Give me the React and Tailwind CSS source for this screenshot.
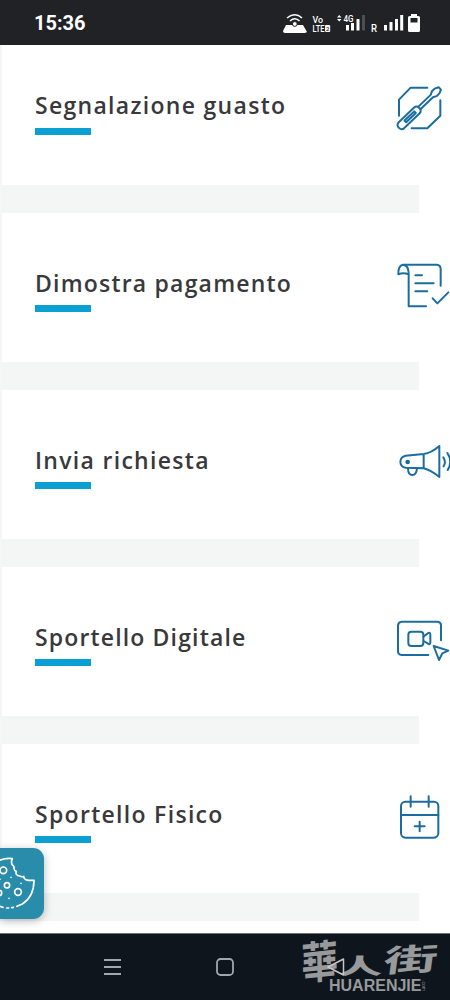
import React from "react";

const ToolIcon = () => (
  <g>
    <path d="M142 53H92L57 89V137M95 175H142L181 137V91" />
    <g transform="translate(66 164) rotate(-43.8)">
      <rect x="-13" y="-12" width="85" height="24" rx="10" />
      <path d="M14 -3.500H54V3.500H14Z" />
      <path d="M74 -5H124L134 -10H146L157 -5V5L146 10H134L124 5H74" />
    </g>
  </g>
);

const ReceiptIcon = () => (
  <g transform="translate(0 9)">
    <path d="M69 41H170Q182 42 182 54V104M69 41Q54 44 55 70Q70 64 86 70V166H138M69 41Q86 42 86 70" />
    <path d="M106 73H126M106 97H161M106 121H142M158 142L172 157L205 124" />
  </g>
);

const MegaphoneIcon = () => (
  <g transform="translate(0 18)">
    <path d="M77 74Q61 77 61 93Q62 108 77 110L131 112Q153 118 178 138V45Q154 66 131 69ZM131 69V112" />
    <path d="M84 111Q84 132 97 132Q109 132 111 112M190 79Q199 92 191 106M202 66Q219 91 203 117" />
    <circle cx="83" cy="93" r="4" fill="currentColor" />
  </g>
);

const VideoIcon = () => (
  <g transform="translate(0 10)">
    <path d="M145 149H65Q54 148 54 138V60Q55 50 65 49H173Q183 50 183 60V105" />
    <rect x="85" y="79" width="45" height="43" rx="9" />
    <path d="M131 93L145 83Q151 81 151 88V112Q150 119 144 115L131 107M161 122L205 136L187 144L177 164Z" />
  </g>
);

const CalendarIcon = () => (
  <g transform="translate(0 4)">
    <rect x="63" y="64" width="112" height="108" rx="13" />
    <path d="M63 104H175M92 48V79M146 48V79M119 124V153M104 138H134" />
  </g>
);

const services = [
  { title: "Segnalazione guasto", Icon: ToolIcon, tracking: "tracking-[1.3px]" },
  { title: "Dimostra pagamento", Icon: ReceiptIcon, tracking: "tracking-[1.2px]" },
  { title: "Invia richiesta", Icon: MegaphoneIcon, tracking: "tracking-[1.3px]" },
  { title: "Sportello Digitale", Icon: VideoIcon, tracking: "tracking-[1.15px]" },
  { title: "Sportello Fisico", Icon: CalendarIcon, tracking: "tracking-[1.3px]" },
];

const StatusBar = () => (
  <header className="h-[45px] shrink-0 bg-[#212226] flex items-center justify-between pl-[34px] pr-[30px] text-white">
    <span className="font-['Roboto',sans-serif] font-bold text-[20px] leading-none">
      15:36
    </span>
    <svg width="138" height="24" viewBox="282 10 138 24" fill="white">
      {/* hotspot */}
      <path d="M286 24H303L307 31Q306 32 304 32H285Q283 32 283 30Z" />
      <circle cx="294.8" cy="23" r="2.4" stroke="#212226" strokeWidth="1" />
      <path
        d="M287 17Q295 10.5 302 17M290 20Q295 15.5 299.5 20"
        fill="none"
        stroke="white"
        strokeWidth="1.5"
      />
      <g fontFamily="Roboto, sans-serif" fontWeight="500">
        <text x="312.500" y="22" fontSize="9.500" textLength="10.500" lengthAdjust="spacingAndGlyphs">Vo</text>
        <text x="312.500" y="30.700" fontSize="9.500" textLength="12" lengthAdjust="spacingAndGlyphs">LTE</text>
        <rect x="325" y="24" width="5.200" height="7" rx="1" />
        <text x="326" y="30" fontSize="6" fill="#212226">2</text>
        <text x="343.500" y="20.800" fontSize="9.500" textLength="10" lengthAdjust="spacingAndGlyphs">4G</text>
        <text x="371" y="30.500" fontSize="10.500" textLength="6" lengthAdjust="spacingAndGlyphs">R</text>
      </g>
      <path d="M337 16.5L339.2 14L341.5 16.5ZM337 18L339.2 20.5L341.5 18Z" />
      <path d="M346 24h3v5.5h-3zM351 22h3v7.5h-3zM356.500 18h3v11.500h-3z" />
      <path d="M362 14h3v15.500h-3z" opacity=".2" />
      <path d="M384 24h3v5.500h-3zM389.500 21h3v8.500h-3zM395 18h3v11.500h-3zM400.200 14h3v15.500h-3z" />
      {/* battery */}
      <path
        fillRule="evenodd"
        d="M411 13h6v2h1.500q1.500 0 1.500 1.500v13q0 1.500-1.500 1.500h-9q-1.500 0-1.500-1.500v-13q0-1.500 1.500-1.500h1.500zM410.500 17v4.500h7V17z"
      />
    </svg>
  </header>
);

const ServiceCard = ({ title, Icon, tracking }) => (
  <article>
    <div className="h-[149.200px] bg-white flex justify-between items-start">
      <div className="pt-[55px] pl-[33px]">
        <h2
          className={`font-['Open_Sans',sans-serif] font-semibold text-[23px] leading-[30px] whitespace-nowrap text-[#39393b] ${tracking}`}
        >
          {title}
        </h2>
        <div className="mt-[7.300px] w-[56px] h-[7px] bg-[#0b9fd2]" />
      </div>
      <svg
        className="mt-[35px] w-[70px] h-[70px] shrink-0 text-[#1b6d9f]"
        viewBox="0 0 210 210"
        fill="none"
        stroke="currentColor"
        strokeWidth="6"
        strokeLinecap="round"
        strokeLinejoin="round"
      >
        <Icon />
      </svg>
    </div>
    <div className="h-[28px] w-[417px] bg-[#f4f6f6]" />
  </article>
);

const CookieButton = () => (
  <button
    aria-label="Cookie"
    className="absolute left-0 top-[803px] w-[44px] h-[71px] rounded-r-[11px] bg-[#298caa] shadow-[0_2px_9px_rgba(0,0,0,0.28)]"
  >
    <svg
      width="44"
      height="71"
      viewBox="0 0 132 213"
      fill="none"
      stroke="white"
      strokeWidth="5"
      strokeLinecap="round"
      strokeLinejoin="round"
    >
      <path d="M-4 38Q15 29 37 32Q30 48 42 56Q41 67 49 70Q45 82 59 84Q67 88 71 85Q72 95 85 97H102Q102 146 67 168L51 175M40 178L35 179M26 180L20 180M9 178L-5 174" />
      <circle cx="10" cy="67" r="10" />
      <circle cx="21" cy="112" r="8" />
      <circle cx="54" cy="132" r="10" />
      <circle cx="-3" cy="135" r="8" />
      <path d="M33 88V88.100M63 106V106.100M27 151V151.100M0 94V94.100" />
    </svg>
  </button>
);

const Watermark = () => (
  <div className="absolute left-[300px] top-0 w-[150px] h-full text-[#98999b] leading-none">
    <div className="font-['Noto_Sans_CJK_TC',sans-serif] font-bold">
      <span className="absolute left-[1px] top-0 text-[37px] leading-[50px] origin-center -skew-x-6 -rotate-6 scale-y-120">
        華
      </span>
      <span className="absolute left-[39px] top-[9px] text-[43px] leading-[42px] origin-center scale-y-50 font-black">
        人
      </span>
      <span className="absolute left-[94px] top-[7px] text-[34px] leading-[34px] origin-center -skew-x-6 -rotate-3 scale-x-160 scale-y-90">
        街
      </span>
    </div>
    <span className="absolute left-[29px] top-[44px] font-['Liberation_Sans',sans-serif] font-bold text-[16px] leading-[16px] whitespace-nowrap">
      HUARENJIE
    </span>
    <span className="absolute left-[121px] top-[46px] font-['Liberation_Sans',sans-serif] text-[5px] leading-[5px] [writing-mode:vertical-rl]">
      .com
    </span>
  </div>
);

const NavBar = () => (
  <nav className="relative h-[67px] shrink-0 bg-[#0e151d] border-t border-[#6d7278]">
    <div className="flex items-center h-full pl-[104px] gap-[94px] text-[#a3a6aa]">
      <svg width="18" height="20" viewBox="0 0 18 20" stroke="currentColor" strokeWidth="1.800">
        <path d="M0 3H17M0 10H17M0 17H17" />
      </svg>
      <svg width="18" height="20" viewBox="0 0 18 20" fill="none" stroke="currentColor" strokeWidth="1.800">
        <rect x="1" y="2" width="16" height="16" rx="3.500" />
      </svg>
    </div>
    <Watermark />
    <svg className="absolute left-[326px] top-[21px]" width="20" height="22" viewBox="0 0 20 22" fill="none" stroke="#c5c6c8" strokeWidth="1.500" strokeLinejoin="round">
      <path d="M17.500 4V20L2 12Z" />
    </svg>
  </nav>
);

const App = () => {
  return (
    <div className="w-[450px] h-[1000px] flex flex-col overflow-hidden bg-white">
      <StatusBar />
      <main className="relative flex-1 min-h-0 overflow-hidden">
        <div className="-mt-[9.700px] border-l-2 border-[#f5f7f7]">
          {services.map((service) => (
            <ServiceCard key={service.title} {...service} />
          ))}
        </div>
        <CookieButton />
      </main>
      <NavBar />
    </div>
  );
};

export default App;
